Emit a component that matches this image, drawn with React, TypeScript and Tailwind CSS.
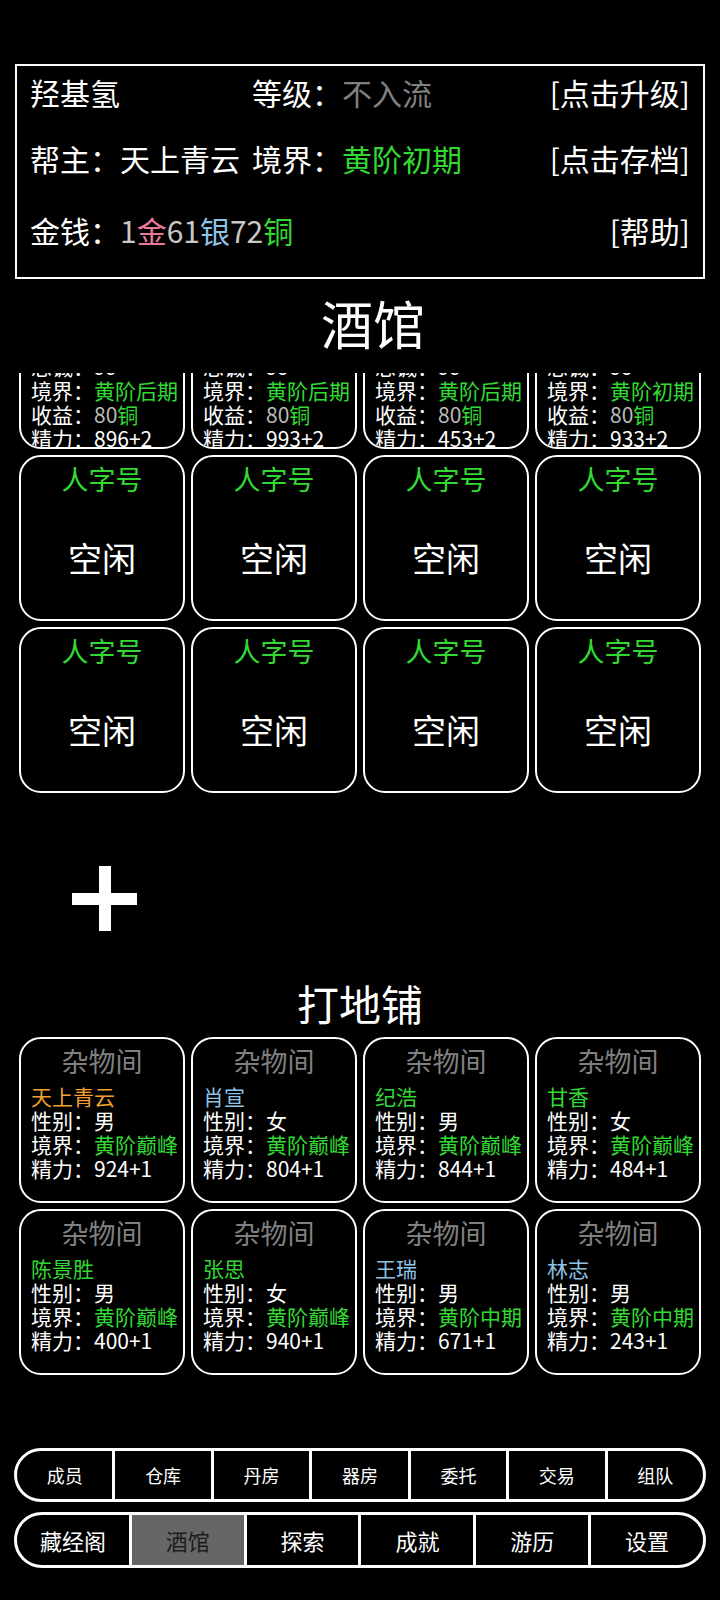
import type { ReactNode } from 'react'

const GREEN = 'text-[#33d933]'

type Member = {
  name: string
  nameColor: string
  gender: string
  realm: string
  energy: string
}

// 打地铺 occupants
const sleepers: Member[] = [
  { name: '天上青云', nameColor: 'text-[#f0a030]', gender: '男', realm: '黄阶巅峰', energy: '924+1' },
  { name: '肖宣', nameColor: 'text-[#8ec3e6]', gender: '女', realm: '黄阶巅峰', energy: '804+1' },
  { name: '纪浩', nameColor: GREEN, gender: '男', realm: '黄阶巅峰', energy: '844+1' },
  { name: '甘香', nameColor: GREEN, gender: '女', realm: '黄阶巅峰', energy: '484+1' },
  { name: '陈景胜', nameColor: GREEN, gender: '男', realm: '黄阶巅峰', energy: '400+1' },
  { name: '张思', nameColor: GREEN, gender: '女', realm: '黄阶巅峰', energy: '940+1' },
  { name: '王瑞', nameColor: 'text-[#8ec3e6]', gender: '男', realm: '黄阶中期', energy: '671+1' },
  { name: '林志', nameColor: 'text-[#8ec3e6]', gender: '男', realm: '黄阶中期', energy: '243+1' },
]

// tavern rooms that are taken (top row, scrolled partly out of view)
const guests = [
  { name: '赵青', realm: '黄阶后期', energy: '896+2' },
  { name: '孙乐', realm: '黄阶后期', energy: '993+2' },
  { name: '周文', realm: '黄阶后期', energy: '453+2' },
  { name: '吴山', realm: '黄阶初期', energy: '933+2' },
]

function Card({ title, titleClass, children }: { title: string; titleClass: string; children: ReactNode }) {
  return (
    <div className="h-[166px] rounded-[22px] border-[2.5px] border-white pt-[5px] px-[10px] overflow-hidden">
      <div className={`text-center text-[27px] leading-[34px] ${titleClass}`}>{title}</div>
      <div className="mt-[6px]">{children}</div>
    </div>
  )
}

function Line({ label, children }: { label: string; children: ReactNode }) {
  return (
    <div className="text-[21px] leading-[24px] text-white whitespace-nowrap">
      {label}：{children}
    </div>
  )
}

function EmptyRoom() {
  return (
    <div className="h-[166px] rounded-[22px] border-[2.5px] border-white pt-[5px] flex flex-col items-center">
      <div className={`text-[27px] leading-[34px] ${GREEN}`}>人字号</div>
      <div className="mt-[42px] text-[34px] leading-[40px] text-white">空闲</div>
    </div>
  )
}

function NavBar({ items, active, className }: { items: string[]; active?: string; className: string }) {
  return (
    <div className={`flex mx-[14px] rounded-full border-[3px] border-white overflow-hidden divide-x-[3px] divide-white ${className}`}>
      {items.map((item) => (
        <div
          key={item}
          className={`flex-1 flex items-center justify-center ${
            item === active ? 'bg-[#666666] text-[#1c1c1c]' : 'text-white'
          }`}
        >
          {item}
        </div>
      ))}
    </div>
  )
}

export default function App() {
  return (
    <div
      className="min-h-[1600px] w-[720px] bg-black text-white pt-[64px] pb-[32px]"
      style={{ fontFamily: '"Noto Sans CJK SC", "Noto Sans", sans-serif' }}
    >
      {/* Gang info */}
      <div className="mx-[15px] h-[215px] border-2 border-white px-[13px] text-[30px]">
        <div className="mt-[4px] h-[44px] flex items-center">
          <span className="w-[222px]">羟基氢</span>
          <span>等级：</span>
          <span className="text-[#808080]">不入流</span>
          <span className="ml-auto">[点击升级]</span>
        </div>
        <div className="mt-[22px] h-[44px] flex items-center">
          <span>帮主：天上青云</span>
          <span className="ml-[12px]">境界：</span>
          <span className={GREEN}>黄阶初期</span>
          <span className="ml-auto">[点击存档]</span>
        </div>
        <div className="mt-[28px] h-[44px] flex items-center">
          <span>金钱：</span>
          <span className="text-[#c8c8c8]">1</span>
          <span className="text-[#e8799a]">金</span>
          <span className="text-[#c8c8c8]">61</span>
          <span className="text-[#8ec3e6]">银</span>
          <span className="text-[#c8c8c8]">72</span>
          <span className={GREEN}>铜</span>
          <span className="ml-auto">[帮助]</span>
        </div>
      </div>

      {/* 酒馆 */}
      <div className="h-[94px] flex items-center justify-center pl-[26px] pb-[6px]">
        <span className="text-[52px] leading-[60px]">酒馆</span>
      </div>

      <div className="h-[430px] overflow-hidden">
        <div className="-mt-[90px] grid grid-cols-4 gap-[6px] pl-[19px] pr-[19px]">
          {guests.map((g) => (
            <Card key={g.name} title="人字号" titleClass={GREEN}>
              <div className="text-[21px] leading-[24px] text-[#8ec3e6]">{g.name}</div>
              <Line label="忠诚">99</Line>
              <Line label="境界">
                <span className={GREEN}>{g.realm}</span>
              </Line>
              <Line label="收益">
                <span className="text-[#bbbbbb]">80</span>
                <span className={GREEN}>铜</span>
              </Line>
              <Line label="精力">{g.energy}</Line>
            </Card>
          ))}
          {Array.from({ length: 8 }).map((_, i) => (
            <EmptyRoom key={i} />
          ))}
        </div>
      </div>

      {/* add room */}
      <div className="mt-[63px] ml-[72px] w-[65px] h-[65px] flex items-center justify-center relative">
        <div className="w-[65px] h-[12px] bg-white" />
        <div className="absolute w-[12px] h-[65px] bg-white" />
      </div>

      {/* 打地铺 */}
      <div className="mt-[47px] h-[50px] flex items-center justify-center">
        <span className="text-[42px] leading-[50px]">打地铺</span>
      </div>

      <div className="mt-[9px] grid grid-cols-4 gap-[6px] pl-[19px] pr-[19px]">
        {sleepers.map((m) => (
          <Card key={m.name} title="杂物间" titleClass="text-[#808080]">
            <div className={`text-[21px] leading-[24px] ${m.nameColor}`}>{m.name}</div>
            <Line label="性别">{m.gender}</Line>
            <Line label="境界">
              <span className={GREEN}>{m.realm}</span>
            </Line>
            <Line label="精力">{m.energy}</Line>
          </Card>
        ))}
      </div>

      {/* bottom navigation */}
      <NavBar
        className="mt-[73px] h-[54px] text-[18px]"
        items={['成员', '仓库', '丹房', '器房', '委托', '交易', '组队']}
      />
      <NavBar
        className="mt-[10px] h-[56px] text-[22px]"
        active="酒馆"
        items={['藏经阁', '酒馆', '探索', '成就', '游历', '设置']}
      />
    </div>
  )
}
